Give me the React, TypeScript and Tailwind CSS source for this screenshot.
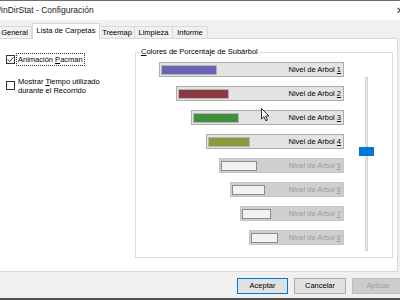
import React from "react";

type Bar = { w: string; sw: string; color: string; n: string; on: boolean };

const bars: Bar[] = [
  { w: "w-[185px]", sw: "w-[56px]", color: "bg-[#6b64b5]", n: "1", on: true },
  { w: "w-[168px]", sw: "w-[51px]", color: "bg-[#8b3a42]", n: "2", on: true },
  { w: "w-[153px]", sw: "w-[46px]", color: "bg-[#3f8f3f]", n: "3", on: true },
  { w: "w-[138px]", sw: "w-[42px]", color: "bg-[#8b993c]", n: "4", on: true },
  { w: "w-[125px]", sw: "w-[36px]", color: "bg-[#f3f3f3]", n: "5", on: false },
  { w: "w-[114px]", sw: "w-[33px]", color: "bg-[#f3f3f3]", n: "6", on: false },
  { w: "w-[104px]", sw: "w-[29px]", color: "bg-[#f3f3f3]", n: "7", on: false },
  { w: "w-[95px]", sw: "w-[27px]", color: "bg-[#f3f3f3]", n: "8", on: false },
];

export default function App() {
  return (
    <div className="relative w-[400px] h-[300px] overflow-hidden bg-[#f0f0f0] font-['Liberation_Sans',Arial,sans-serif] text-[7.5px] text-black leading-none flex flex-col">
      {/* title bar */}
      <div className="h-[20px] bg-white border-t border-[#6d6d6d] flex items-center shrink-0">
        <span className="ml-[-7px] text-[8.5px] text-[#1a1a1a] whitespace-nowrap">WinDirStat - Configuración</span>
        <span className="ml-auto mr-[-4px] text-[10px] text-[#333]">✕</span>
      </div>

      {/* tabs */}
      <div className="h-[18px] flex items-end shrink-0 relative z-10">
        <div className="ml-[-3px] w-[35px] h-[12px] border border-b-0 border-[#d9d9d9] bg-[#f0f0f0] flex items-center justify-center">
          General
        </div>
        <div className="w-[68px] h-[16px] border border-b-0 border-[#d9d9d9] bg-white flex items-center justify-center mb-[-1px] pb-[2px]">
          Lista de Carpetas
        </div>
        <div className="w-[35px] h-[12px] border border-b-0 border-l-0 border-[#d9d9d9] bg-[#f0f0f0] flex items-center justify-center">
          Treemap
        </div>
        <div className="w-[38px] h-[12px] border border-b-0 border-l-0 border-[#d9d9d9] bg-[#f0f0f0] flex items-center justify-center">
          Limpieza
        </div>
        <div className="w-[35px] h-[12px] border border-b-0 border-l-0 border-[#d9d9d9] bg-[#f0f0f0] flex items-center justify-center">
          Informe
        </div>
      </div>

      {/* panel */}
      <div className="ml-[-3px] w-[401px] h-[234px] bg-white border border-[#d9d9d9] flex shrink-0">
        {/* left options */}
        <div className="w-[137px] pl-[8px] pt-[15px] flex flex-col gap-[12px] shrink-0">
          <div className="flex items-center gap-[2px]">
            <div className="w-[9px] h-[9px] border border-[#333] bg-white flex items-center justify-center">
              <svg width="7" height="7" viewBox="0 0 7 7">
                <path d="M0.8 3.6 L2.7 5.6 L6.3 1.2" fill="none" stroke="#222" strokeWidth="0.9" />
              </svg>
            </div>
            <span className="outline outline-1 outline-dotted outline-[#333] px-[1px] py-[1.5px]">
              Animación <span className="underline">P</span>acman
            </span>
          </div>
          <div className="flex items-center gap-[3px]">
            <div className="w-[9px] h-[9px] border border-[#333] bg-white shrink-0" />
            <div className="leading-[9px]">
              <div>
                Mostrar <span className="underline">T</span>iempo utilizado
              </div>
              <div>durante el Recorrido</div>
            </div>
          </div>
        </div>

        {/* group box */}
        <div className="relative mt-[13px] w-[258px] h-[206px] border border-[#dcdcdc] flex shrink-0">
          <span className="absolute left-[4px] top-[-5px] bg-white px-[1px]">
            <span className="underline">C</span>olores de Porcentaje de Subárbol
          </span>
          <div className="w-[208px] pt-[9px] flex flex-col items-end gap-[9px] shrink-0">
            {bars.map((b) => (
              <div
                key={b.n}
                className={`${b.w} h-[15px] flex items-center border ${
                  b.on ? "bg-[#e3e3e3] border-[#adadad] text-black" : "bg-[#cfcfcf] border-[#c4c4c4] text-[#9d9d9d]"
                }`}
              >
                <div className={`${b.sw} h-[10px] ml-[1px] border ${b.on ? "border-[#b5b5b5]" : "border-[#8c8c8c]"} ${b.color}`} />
                <span className="ml-auto pr-[2px]">
                  Nivel de Arbol <span className="underline">{b.n}</span>
                </span>
              </div>
            ))}
          </div>
          {/* slider */}
          <div className="relative ml-[15px] mt-[24px] w-[15px] h-[174px]">
            <div className="absolute left-[6px] top-0 w-[3px] h-full bg-[#e7e7e7] border border-[#d6d6d6]" />
            <div className="absolute left-0 top-[70px] w-[15px] h-[9px] bg-[#0078d7]" />
          </div>
        </div>
      </div>

      {/* buttons */}
      <div className="flex-1 flex items-start pt-[6px] pl-[237px] gap-[6px] border-b-[2px] border-[#505050]">
        <div className="w-[51px] h-[16px] border border-[#0078d7] bg-[#e1e1e1] flex items-center justify-center shrink-0">
          Aceptar
        </div>
        <div className="w-[52px] h-[16px] border border-[#adadad] bg-[#e1e1e1] flex items-center justify-center shrink-0">
          Cancelar
        </div>
        <div className="w-[52px] h-[16px] border border-[#bfbfbf] bg-[#cccccc] text-[#a0a0a0] flex items-center justify-center shrink-0">
          Aplicar
        </div>
      </div>

      {/* mouse cursor */}
      <svg className="absolute left-[261px] top-[108px]" width="9" height="14" viewBox="0 0 9 14">
        <path d="M0.5 0.5 L0.5 11 L3 8.6 L4.8 12.8 L6.4 12.1 L4.7 8 L8 8 Z" fill="#fff" stroke="#000" strokeWidth="0.8" />
      </svg>
    </div>
  );
}
